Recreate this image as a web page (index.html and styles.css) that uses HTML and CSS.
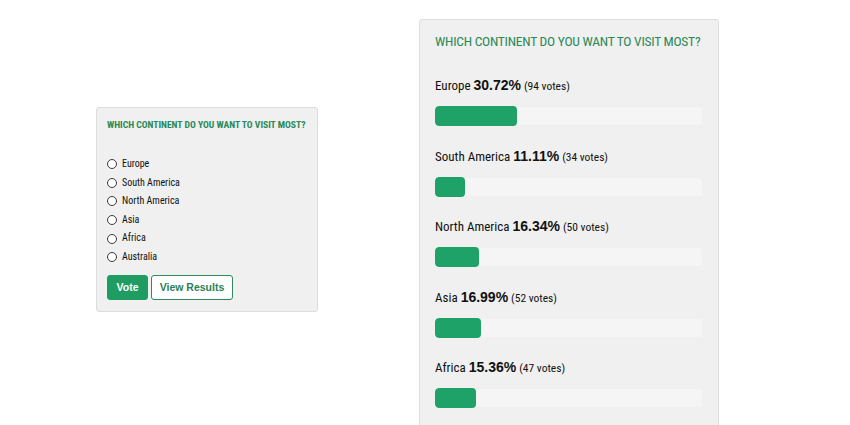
FILE: index.html
```html
<!DOCTYPE html>
<html>
<head>
<meta charset="utf-8">
<link rel="stylesheet" href="styles.css">
</head>
<body>
<div class="page">
  <div class="card poll">
    <h3 class="title small">WHICH CONTINENT DO YOU WANT TO VISIT MOST?</h3>
    <ul class="options">
      <li><span class="radio"></span>Europe</li>
      <li><span class="radio"></span>South America</li>
      <li><span class="radio"></span>North America</li>
      <li><span class="radio"></span>Asia</li>
      <li><span class="radio"></span>Africa</li>
      <li><span class="radio"></span>Australia</li>
    </ul>
    <div class="buttons">
      <button class="btn primary">Vote</button>
      <button class="btn outline">View Results</button>
    </div>
  </div>
  <div class="card results">
    <h3 class="title large">WHICH CONTINENT DO YOU WANT TO VISIT MOST?</h3>
    <div class="row">
      <div class="label">Europe <b>30.72%</b> <span class="votes">(94 votes)</span></div>
      <div class="track"><div class="fill" style="width:30.72%"></div></div>
    </div>
    <div class="row">
      <div class="label">South America <b>11.11%</b> <span class="votes">(34 votes)</span></div>
      <div class="track"><div class="fill" style="width:11.11%"></div></div>
    </div>
    <div class="row">
      <div class="label">North America <b>16.34%</b> <span class="votes">(50 votes)</span></div>
      <div class="track"><div class="fill" style="width:16.34%"></div></div>
    </div>
    <div class="row">
      <div class="label">Asia <b>16.99%</b> <span class="votes">(52 votes)</span></div>
      <div class="track"><div class="fill" style="width:16.99%"></div></div>
    </div>
    <div class="row">
      <div class="label">Africa <b>15.36%</b> <span class="votes">(47 votes)</span></div>
      <div class="track"><div class="fill" style="width:15.36%"></div></div>
    </div>
  </div>
</div>
</body>
</html>
```
FILE: styles.css
```css
html, body {
  margin: 0;
  padding: 0;
  background: #ffffff;
  overflow: hidden;
  height: 425px;
}
body {
  font-family: "Roboto Condensed", "Roboto", sans-serif;
  color: #111;
}
.page {
  display: flex;
  align-items: flex-start;
  gap: 101px;
  padding-left: 96px;
}
.card {
  background: #eff0ef;
  border: 1px solid #dcdddc;
  border-radius: 3px;
  box-sizing: border-box;
}
.poll {
  margin-top: 107px;
  width: 222px;
  height: 205px;
  padding: 11px 11px 0 10px;
}
.title {
  margin: 0;
  color: #2b8857;
  font-weight: normal;
  white-space: nowrap;
}
.title.small {
  font-size: 9.6px;
  line-height: 12px;
  font-weight: bold;
  letter-spacing: 0;
}
.options {
  list-style: none;
  margin: 24px 0 0 0;
  padding: 0;
}
.options li {
  display: flex;
  align-items: center;
  gap: 5px;
  font-size: 10px;
  height: 18.6px;
  line-height: 18.6px;
}
.radio {
  width: 8px;
  height: 8px;
  border: 1px solid #3a3a3a;
  border-radius: 50%;
  background: #fff;
  flex: none;
}
.buttons {
  display: flex;
  gap: 3px;
  margin-top: 8px;
}
.btn {
  font-family: "Liberation Sans", Arial, sans-serif;
  font-weight: bold;
  font-size: 10.5px;
  height: 25px;
  border-radius: 3px;
  padding: 0;
  cursor: pointer;
}
.btn.primary {
  background: #1e9c62;
  border: 1px solid #1e9c62;
  color: #fff;
  width: 41px;
}
.btn.outline {
  background: #fff;
  border: 1px solid #2f8a5c;
  color: #2b7f55;
  width: 82px;
}
.results {
  margin-top: 19px;
  width: 300px;
  height: 440px;
  padding: 13px 15px 0 15px;
}
.title.large {
  font-size: 13.5px;
  line-height: 16px;
  letter-spacing: -0.25px;
}
.row {
  margin-top: 21.5px;
}
.row:nth-of-type(1) {
  margin-top: 28px;
}
.label {
  font-size: 13px;
  line-height: 16px;
  height: 16px;
  white-space: nowrap;
}
.label b {
  font-family: "Liberation Sans", Arial, sans-serif;
  font-size: 14px;
  line-height: 16px;
}
.label .votes {
  font-size: 11.5px;
}
.track {
  margin-top: 13px;
  height: 20px;
  background: #f5f5f5;
  border-radius: 4px;
  box-shadow: inset 0 0 0 1px rgba(0,0,0,0.025);
  overflow: hidden;
}
.fill {
  height: 100%;
  background: #1fa267;
  border-radius: 4px;
}
```
